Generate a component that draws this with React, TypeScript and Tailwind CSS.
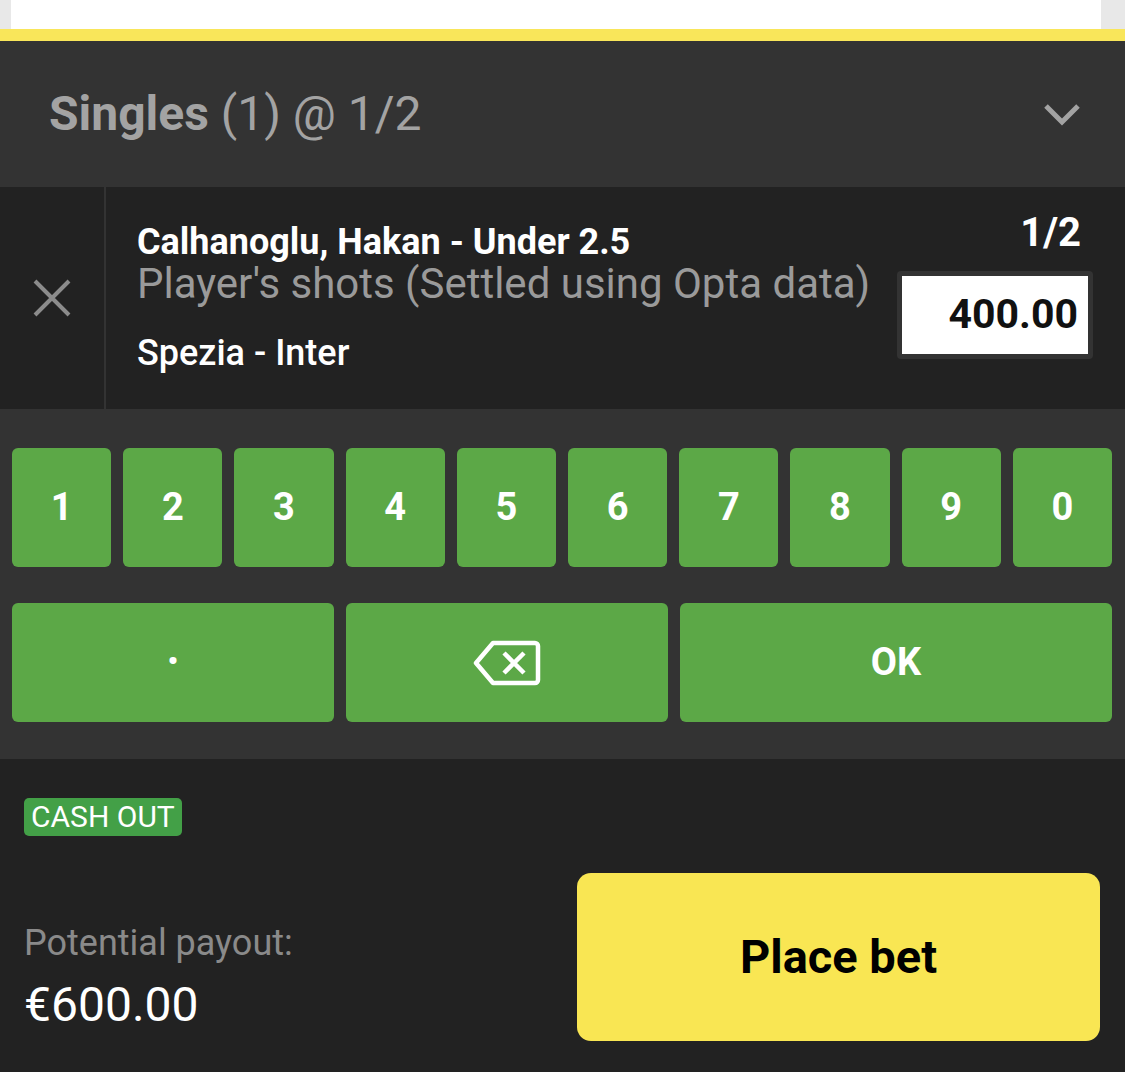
import React from 'react';

const digits = ['1', '2', '3', '4', '5', '6', '7', '8', '9', '0'];

const Key = ({ children }: { children: React.ReactNode }) => (
  <button className="flex items-center justify-center rounded-[6px] bg-[#5ca847] text-[38px] font-bold text-white">
    {children}
  </button>
);

const App = () => {
  return (
    <div className="h-[1072px] w-full overflow-hidden bg-[#222222] font-['Roboto',sans-serif]">
      {/* page behind the slip */}
      <div className="flex h-[29px]">
        <div className="w-[11px] bg-[#e8e8e8]" />
        <div className="flex-1 bg-white" />
        <div className="w-[24px] bg-[#e8e8e8]" />
      </div>
      <div className="h-[12px] bg-[#f9e65a]" />

      {/* header */}
      <div className="flex h-[146px] items-center justify-between bg-[#333333] pl-[49px] pr-[44px] text-[#a3a3a3]">
        <h2 className="text-[48px] leading-none">
          <span className="font-bold">Singles</span> (1) @ 1/2
        </h2>
        <svg width="38" height="24" viewBox="0 0 38 24" fill="none">
          <polyline points="3,4 19,20 35,4" stroke="#a3a3a3" strokeWidth="5" />
        </svg>
      </div>

      {/* selection */}
      <div className="flex h-[222px] bg-[#222222]">
        <div className="flex w-[106px] items-center justify-center border-r-2 border-[#333333]">
          <svg width="40" height="40" viewBox="0 0 40 40">
            <path d="M3 3 L37 37 M37 3 L3 37" stroke="#8c8c8c" strokeWidth="4" />
          </svg>
        </div>
        <div className="flex flex-1 items-start pl-[31px] pr-[32px] pt-[34px]">
          <div className="flex-1">
            <p className="text-[36px] font-bold leading-[42px] text-white">Calhanoglu, Hakan - Under 2.5</p>
            <p className="text-[42px] leading-[42px] text-[#9a9a9a]">Player's shots (Settled using Opta data)</p>
            <p className="mt-[27px] text-[36px] font-medium leading-[42px] text-white">Spezia - Inter</p>
          </div>
          <div className="flex flex-col items-end">
            <span className="-mt-[10px] pr-[12px] text-[40px] font-bold leading-[44px] text-white">1/2</span>
            <div className="mt-[16px] w-[196px] rounded-[4px] bg-[#333333] p-[5px]">
              <div className="flex h-[78px] items-center justify-end bg-white pr-[10px] text-[41px] font-bold text-[#111111]">
                400.00
              </div>
            </div>
          </div>
        </div>
      </div>

      {/* keypad */}
      <div className="bg-[#333333] pb-[37px] pl-[12px] pr-[13px] pt-[39px]">
        <div className="grid h-[119px] grid-cols-10 gap-x-[12px]">
          {digits.map((d) => (
            <Key key={d}>{d}</Key>
          ))}
        </div>
        <div className="mt-[36px] grid h-[119px] grid-cols-[322px_322px_1fr] gap-x-[12px]">
          <Key>
            <span className="mb-[4px] text-[30px]">•</span>
          </Key>
          <Key>
            <svg width="68" height="48" viewBox="0 0 68 48" fill="none" stroke="white" strokeWidth="4.5" strokeLinejoin="round">
              <path d="M3 24 L20 4 H62 a3 3 0 0 1 3 3 V41 a3 3 0 0 1 -3 3 H20 Z" />
              <path d="M31 14 L51 34 M51 14 L31 34" />
            </svg>
          </Key>
          <Key>OK</Key>
        </div>
      </div>

      {/* footer */}
      <div className="bg-[#222222] pl-[24px] pr-[25px] pt-[39px]">
        <span className="inline-block rounded-[5px] bg-[#43a047] px-[7px] text-[30px] leading-[38px] text-white">CASH OUT</span>
        <div className="mt-[37px] flex items-center justify-between">
          <div className="pt-[38px]">
            <p className="text-[36px] leading-[44px] text-[#8a8a8a]">Potential payout:</p>
            <p className="mt-[14px] text-[48px] leading-[52px] text-white">€600.00</p>
          </div>
          <button className="flex h-[168px] w-[523px] items-center justify-center rounded-[14px] bg-[#f9e653] text-[47px] font-bold text-black">
            Place bet
          </button>
        </div>
      </div>
    </div>
  );
};

export default App;
